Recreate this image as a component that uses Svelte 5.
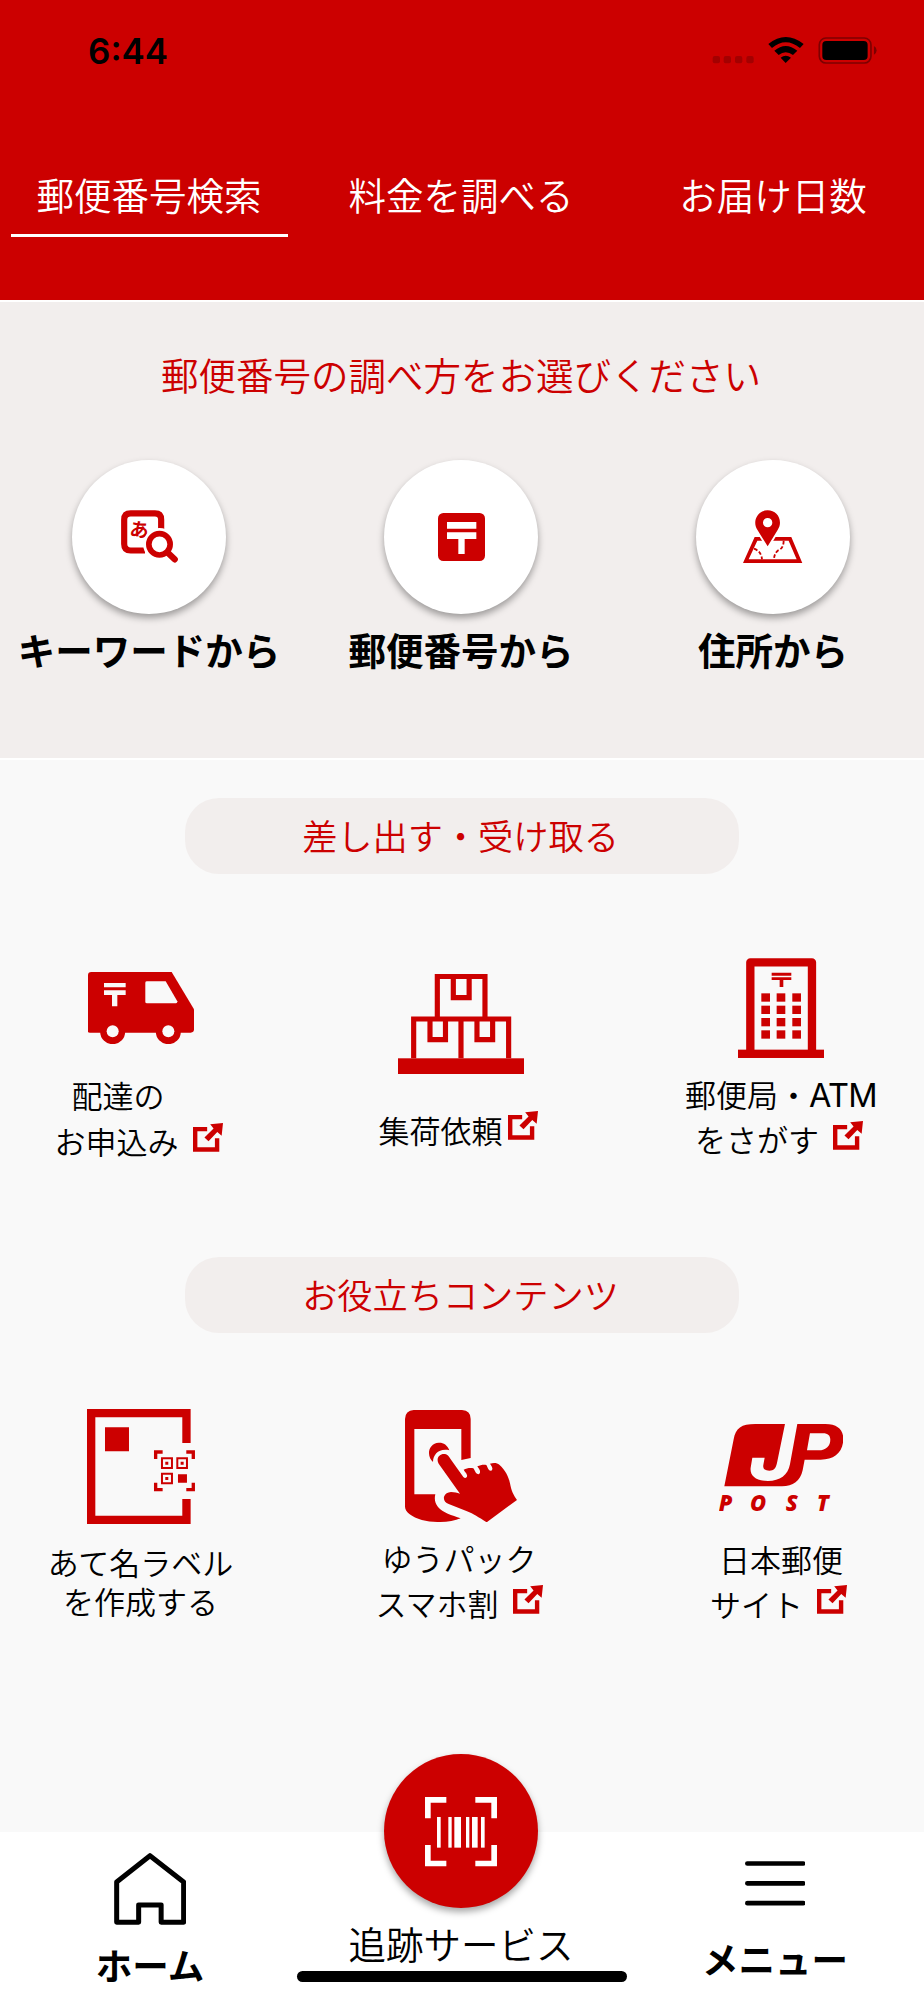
<script>
  const tabs = ['郵便番号検索', '料金を調べる', 'お届け日数'];
  const methods = [
    { icon: 'keyword', label: 'キーワードから' },
    { icon: 'postal', label: '郵便番号から' },
    { icon: 'map', label: '住所から' }
  ];
  const windows = [640, 677, 714, 751].flatMap((y) => [899, 945, 992].map((x) => ({ x, y })));
  const bars = [[1311, 11], [1345, 10], [1363, 20], [1398, 10], [1416, 17], [1443, 11]];
</script>

{#snippet ext()}
  <svg class="ext" viewBox="579 1030 89 86" width="30" height="29">
    <path d="M621 1048H585.500V1108.500H650.500V1075" fill="none" stroke="#c00" stroke-width="13" />
    <path d="M668 1030L630 1034L640 1046L613 1073L625 1084L651 1057L664 1068Z" fill="#c00" />
  </svg>
{/snippet}

<div class="screen">
  <header>
    <div class="status">
      <span class="time">6:44</span>
      <svg class="sys" viewBox="748 108 496 86" width="165.300" height="28.700">
        <g fill="#a30000">
          <rect x="750" y="168" width="22" height="22" rx="6" />
          <rect x="783" y="168" width="22" height="22" rx="6" />
          <rect x="817" y="168" width="22" height="22" rx="6" />
          <rect x="851" y="168" width="22" height="22" rx="6" />
        </g>
        <path d="M917 132Q969 90 1023 132L1012 144Q969 110 928 144ZM935 152Q969 124 1004 152L991 165Q969 149 948 165ZM954 173Q969 161 985 173L969 189Z" />
        <rect x="1070" y="114" width="155" height="75" rx="20" fill="none" stroke="#7d0000" stroke-width="5" />
        <rect x="1079" y="123" width="136" height="57" rx="12" />
        <path d="M1234 138Q1242 142 1242 151.500Q1242 160 1234 164Z" fill="#7d0000" />
      </svg>
    </div>
    <nav class="tabs">
      {#each tabs as tab, i}
        <span class="tab" class:active={i === 0}>{tab}</span>
      {/each}
    </nav>
  </header>

  <section class="search">
    <h1>郵便番号の調べ方をお選びください</h1>
    <div class="methods">
      {#each methods as m}
        <div class="method">
          <span class="disc">
            {#if m.icon === 'keyword'}
              <svg viewBox="360 512 171 160" width="57" height="53.300">
                <path d="M480.500 570V541Q480.500 522 462 522H389Q369.500 522 369.500 541V614Q369.500 633.500 389 633.500H432" fill="none" stroke="#c00" stroke-width="18.500" />
                <text x="387" y="592" class="kana" transform="rotate(8 417 570)">あ</text>
                <circle cx="475.500" cy="615" r="49" fill="#fff" />
                <circle cx="475.500" cy="615" r="32" fill="none" stroke="#c00" stroke-width="17" />
                <path d="M502 642L521 660" stroke="#c00" stroke-width="19" stroke-linecap="round" />
              </svg>
            {:else if m.icon === 'postal'}
              <svg viewBox="172 129 141 144" width="47" height="48">
                <rect x="172" y="129" width="141" height="144" rx="16" fill="#c00" />
                <path d="M199 156H287V176H199ZM199 187H287V207H252V252H233V207H199Z" fill="#fff" />
              </svg>
            {:else}
              <svg viewBox="845 512 178 160" width="59.300" height="53.300">
                <path fill-rule="evenodd" d="M845 671L880 593H990L1023 671ZM862 660H1006L982 604H888Z" fill="#c00" />
                <path d="M878 628Q900 636 902 660M967 604Q967 627 951 633Q939 642 938 660" fill="none" stroke="#c00" stroke-width="5.500" stroke-dasharray="11 6" />
                <path d="M892 588H946L919 632Z" fill="#fff" />
                <path fill-rule="evenodd" d="M919 621L888 571C879 557 881 542 886 533C893 520 905 513 919 513C940 513 956 529 956 550C956 559 953 565 949 572ZM933 550A14 14 0 1 0 905 550A14 14 0 1 0 933 550Z" fill="#c00" />
              </svg>
            {/if}
          </span>
          <b>{m.label}</b>
        </div>
      {/each}
    </div>
  </section>

  <section class="services">
    <h2 class="pill">差し出す・受け取る</h2>
    <div class="row first">
      <div class="item van">
        <svg viewBox="264 576 318 216" width="106" height="72">
          <path d="M274 576H515L582 688V748Q582 758 572 758H274Q264 758 264 755V586Q264 576 274 576Z" fill="#c00" />
          <circle cx="338" cy="755" r="37.500" fill="#c00" />
          <circle cx="505" cy="755" r="37.500" fill="#c00" />
          <g fill="#f9f9f9">
            <circle cx="338" cy="754" r="18" />
            <circle cx="505" cy="754" r="18" />
            <path d="M441 604H497L532 664Q532 670 528 670H441Q436 670 436 666V608Q436 604 441 604Z" />
            <path d="M312 609H377V622H312ZM312 631H377V645H352V679H336V645H312Z" />
          </g>
        </svg>
        <p class="shifted">配達の</p>
        <p>お申込み{@render ext()}</p>
      </div>
      <div class="item boxes">
        <svg viewBox="1193 581 379 301" width="126.300" height="100.300">
          <path d="M1311 709V588.500H1454V709M1359 589V652H1406.500V589M1240 834V716H1525V834M1382 716V834M1289 716V778H1335.500V716M1430 716V778H1477V716" fill="none" stroke="#c00" stroke-width="15.500" />
          <rect x="1193" y="834" width="379" height="48" fill="#c00" />
        </svg>
        <p>集荷依頼{@render ext()}</p>
      </div>
      <div class="item office">
        <svg viewBox="829 534 259 300" width="86.300" height="100">
          <path d="M866 810V547H1051V810" fill="none" stroke="#c00" stroke-width="25" stroke-linejoin="round" />
          <g fill="#c00">
            <rect x="829" y="809" width="259" height="25" />
            <path d="M930 578H989V587H930ZM930 592H989V600H965V621H954V600H930Z" />
            {#each windows as w}
              <rect x={w.x} y={w.y} width="26" height="25" />
            {/each}
          </g>
        </svg>
        <p>郵便局・<span class="latin">ATM</span></p>
        <p>をさがす{@render ext()}</p>
      </div>
    </div>

    <h2 class="pill">お役立ちコンテンツ</h2>
    <div class="row">
      <div class="item label">
        <svg viewBox="261 506 325 345" width="108.300" height="115">
          <g fill="none" stroke="#c00">
            <path d="M559.500 608V518.500H273.500V838.500H559.500V776" stroke-width="25" />
            <path d="M467 656V635H488M559 635H580V656M580 727V748H559M488 748H467V727" stroke-width="10" />
            <path d="M486 654H516V683H486ZM532 654H561V683H532ZM486 700H516V729H486Z" stroke-width="6" />
          </g>
          <path d="M315 561H387V633H315ZM496 664H505V673H496ZM542 664H551V673H542ZM496 710H505V719H496ZM534 702H561V727H534Z" fill="#c00" />
        </svg>
        <p>あて名ラベル</p>
        <p>を作成する</p>
      </div>
      <div class="item phone">
        <svg viewBox="29 30 336 337" width="112" height="112.300">
          <g fill="#c00">
            <path d="M55 30H200Q226 31 226 57V174L198 180V87H57V283H120C116 298 120 311 128 321C142 338 170 346 196 355C155 372 78 371 42 342Q29 331 29 320V57Q30 31 55 30Z" />
            <path d="M162 151C156 134 143 127 130 128C112 129 100 144 101 160C101 171 106 180 113 186C113 163 132 144 162 151Z" />
            <path d="M130 191C120 174 135 158 152 163C158 166 161 170 165 176L204 231C210 237 217 232 215 226C214 219 208 215 205 209C214 204 226 203 234 205C239 211 241 223 250 223C256 220 255 212 251 206Q247 201 246 199C256 194 266 193 273 195C277 202 280 214 288 212C294 208 291 200 284 191C296 187 306 189 312 194C330 210 340 230 344 250C348 272 354 285 365 300L274 367C250 352 235 342 215 334L160 312C150 308 144 300 146 290C149 281 157 277 167 276C178 276 185 279 194 281Z" />
          </g>
        </svg>
        <p>ゆうパック</p>
        <p>スマホ割{@render ext()}</p>
      </div>
      <div class="item post">
        <svg viewBox="773 551 373 264" width="124.300" height="88">
          <path fill-rule="evenodd" d="M971 551L947 668C943 686 937 691 924 691C910 691 904 685 906 674L910 652H873L868 682C865 708 885 722 920 722C956 722 980 705 986 672L1008 551H1092C1130 551 1146 570 1146 595C1146 635 1120 658 1078 658H1030L1024 690C1017 722 995 738 962 738H789L817 597C823 563 840 551 882 551ZM1046 579L1037 630H1072C1095 630 1107 616 1107 598C1107 586 1100 579 1085 579Z" fill="#c00" />
          <text x="772 866 973 1066" y="813" class="wordmark">POST</text>
        </svg>
        <p>日本郵便</p>
        <p>サイト{@render ext()}</p>
      </div>
    </div>
  </section>

  <footer>
    <div class="dock home">
      <svg viewBox="343 337 217 216" width="72.300" height="72">
        <path d="M351 424L451 345L552 424V545H484.500V493H417V545H351Z" fill="none" stroke="#000" stroke-width="15" stroke-linejoin="round" />
      </svg>
      <b>ホーム</b>
    </div>
    <div class="dock track">
      <span class="disc red">
        <svg viewBox="1275 171 216 208" width="72" height="69.300">
          <path d="M1283.500 235V179.500H1339M1426 179.500H1482.500V235M1482.500 315V370.500H1426M1339 370.500H1283.500V315" fill="none" stroke="#fff" stroke-width="17" />
          {#each bars as [x, w]}
            <rect {x} y="231" width={w} height="92" fill="#fff" />
          {/each}
        </svg>
      </span>
      <span>追跡サービス</span>
    </div>
    <div class="dock menu">
      <svg viewBox="849 363 182 134" width="60.700" height="44.700">
        <path d="M856 370.500H1024M856 430H1024M856 489.500H1024" stroke="#000" stroke-width="14" stroke-linecap="round" />
      </svg>
      <b>メニュー</b>
    </div>
    <i class="indicator"></i>
  </footer>
</div>

<style>
  :global(body) { margin: 0; }
  .screen {
    width: 924px;
    height: 2000px;
    display: flex;
    flex-direction: column;
    overflow: hidden;
    background: #f9f9f9;
    color: #000;
    font-family: "Noto Sans CJK JP", sans-serif;
    font-weight: 350;
    font-size: 31px;
  }
  svg { display: block; flex: none; }
  h1, h2, p { margin: 0; font-weight: 350; white-space: nowrap; }
  header { height: 300px; background: #c00; flex: none; }
  .status {
    height: 101px;
    padding: 0 47px 0 88px;
    display: flex;
    justify-content: space-between;
    align-items: center;
  }
  .time { font: 600 35px/40px Inter, sans-serif; }
  .tabs {
    margin: 69px 12px 0 11px;
    display: grid;
    grid-template-columns: repeat(3, 277px);
    gap: 35px;
  }
  .tab {
    height: 64px;
    line-height: 48px;
    font-size: 37.500px;
    color: #fff;
    text-align: center;
    text-indent: -1px;
    border-bottom: 3px solid transparent;
  }
  .tab.active { border-color: #fff; }

  .search {
    flex: none;
    height: 456px;
    background: #f2eeed;
    border-top: 2px solid #fff;
    border-bottom: 2px solid #fff;
  }
  h1 {
    margin-top: 47px;
    line-height: 50px;
    font-size: 37.500px;
    color: #c00;
    text-align: center;
    text-indent: -2px;
  }
  .methods {
    margin: 61px 13px 0 10px;
    display: grid;
    grid-template-columns: repeat(3, 277px);
    gap: 35px;
  }
  .method { display: flex; flex-direction: column; align-items: center; }
  .method svg { margin-left: 1px; }
  .method b { font-size: 37.500px; line-height: 50px; margin-top: 10px; padding-left: 1px; font-weight: 700; white-space: nowrap; }
  .disc {
    width: 154px;
    height: 154px;
    border-radius: 50%;
    background: #fff;
    display: flex;
    align-items: center;
    justify-content: center;
    box-shadow: 0 4px 7px rgba(0, 0, 0, 0.35);
  }
  .kana { font: 700 57px "Noto Sans CJK JP", sans-serif; fill: #c00; }

  .services { flex: none; height: 1072px; padding-top: 38px; box-sizing: border-box; }
  .pill {
    width: 554px;
    height: 76px;
    margin: 0 auto;
    border-radius: 34px;
    background: #f2eeed;
    color: #c00;
    font-size: 35.200px;
    line-height: 74px;
    text-align: center;
    text-indent: -3px;
  }
  .row { display: grid; grid-template-columns: 282px 358px 282px; }
  .first { height: 383px; }
  .item { display: flex; flex-direction: column; align-items: center; }
  .item p { display: flex; align-items: center; line-height: 45px; height: 45px; }
  .ext { margin: 0 0 7px 14px; }
  .van > svg { margin: 98px 0 28px; }
  .item.van p { line-height: 46px; height: 46px; padding-right: 5px; }
  .item.van p.shifted { padding-right: 46px; }
  .boxes > svg { margin: 99.500px 0 33px; }
  .boxes .ext { margin-left: 5px; }
  .boxes p { padding-right: 6px; }
  .office > svg { margin: 84px 0 13px; }
  .office p:last-child { padding-right: 4px; }
  .latin { font-family: Inter, sans-serif; font-weight: 400; font-size: 32.500px; letter-spacing: -0.600px; padding-top: 4px; }
  .label > svg { margin: 76px 0 17.500px; }
  .item.label p { line-height: 39px; height: 39px; padding-right: 1px; }
  .phone > svg { margin: 77px 0 13px; }
  .phone p { padding-right: 4px; }
  .post > svg { margin: 90.500px 0 24px; }
  .post p:last-child { padding-right: 5px; }
  .wordmark { font: italic 800 66px "Open Sans", sans-serif; fill: #c00; }

  footer {
    position: relative;
    flex: none;
    height: 168px;
    background: #fff;
    display: grid;
    grid-template-columns: 300px 322px 302px;
  }
  .dock { display: flex; flex-direction: column; align-items: center; font-size: 37.500px; white-space: nowrap; }
  .dock b { font-size: 36.500px; line-height: 50px; font-weight: 700; }
  .home > svg { margin: 20.500px 0 15px; }
  .menu { padding-left: 4px; }
  .menu > svg { margin: 29px 0 28px; }
  .track { margin-top: -78px; line-height: 50px; }
  .disc.red { background: #c00; margin-bottom: 10px; flex: none; }
  .red svg { margin-top: 2px; }
  .indicator {
    position: absolute;
    left: 297px;
    top: 139px;
    width: 330px;
    height: 11px;
    border-radius: 6px;
    background: #000;
  }
</style>
